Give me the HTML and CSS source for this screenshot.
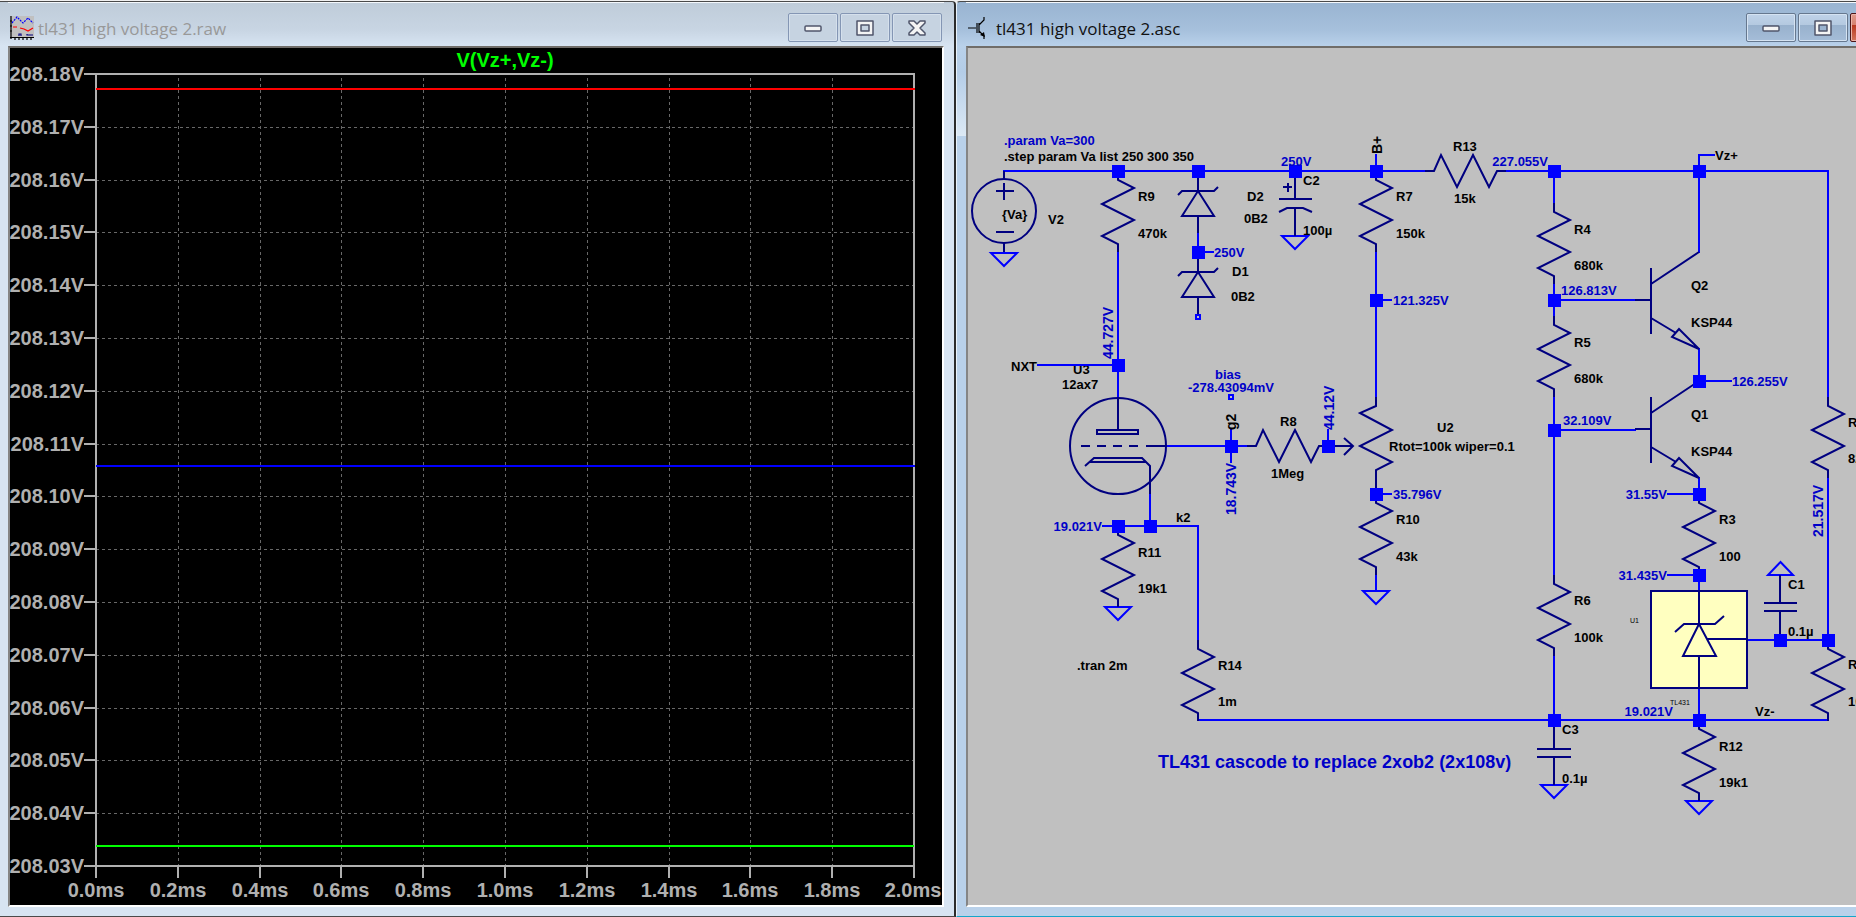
FILE: index.html
```html
<!DOCTYPE html>
<html lang="en">
<head>
<meta charset="utf-8">
<title>tl431 high voltage 2</title>
<link rel="stylesheet" href="styles.css">
</head>
<body>
<main class="desk">
  <section class="window window-inactive">
    <header class="titlebar">
      <svg class="app-icon" width="24" height="24" viewBox="0 0 24 24" aria-hidden="true">
        <rect width="24" height="22" fill="#c0c0c0"/>
        <path d="M2 7L7 1L13 7L18 2L23 7" fill="none" stroke="#00f" stroke-width="1.2" stroke-dasharray="2 1"/>
        <path d="M3 11H7M10 12L14 13L18 15L23 12" fill="none" stroke="#f00" stroke-width="1.2"/>
        <path d="M9 20V18H11V20M17 18V19H23" fill="none" stroke="#000080" stroke-width="1.2"/>
        <path d="M1 0V23M0 21.500H24M5 22V24M9 22V24M13 22V24M17 22V24M21 22V24M0 5H2M0 10H2M0 15H2" fill="none" stroke="#000" stroke-width="1.2"/>
      </svg>
      <h1 class="title">tl431 high voltage 2.raw</h1>
      <div class="controls">
        <button class="control" type="button" aria-label="Minimize"><svg width="20" height="18" viewBox="0 0 20 18"><rect class="glyph" x="2" y="7" width="16" height="5" rx="1"/></svg></button>
        <button class="control" type="button" aria-label="Maximize"><svg width="20" height="18" viewBox="0 0 20 18"><path class="glyph" fill-rule="evenodd" d="M2 2H18V16H2ZM6 6V12H14V6Z"/></svg></button>
        <button class="control" type="button" aria-label="Close"><svg width="20" height="18" viewBox="0 0 20 18"><path class="glyph" d="M2 2H7L10 5L13 2H18V4L13 9L18 14V16H13L10 13L7 16H2V14L7 9L2 4Z"/></svg></button>
      </div>
    </header>
    <div class="client client-plot">
      <svg class="canvas" viewBox="10 48 932 856" preserveAspectRatio="xMinYMin meet" role="img" aria-label="V(Vz+,Vz-) against time">
        <path class="grid" d="M96 127H914M96 180H914M96 232H914M96 285H914M96 338H914M96 391H914M96 444H914M96 496H914M96 549H914M96 602H914M96 655H914M96 708H914M96 760H914M96 813H914"/>
        <path class="grid" d="M178 78V866M260 78V866M341 78V866M423 78V866M505 78V866M587 78V866M669 78V866M750 78V866M832 78V866"/>
        <path class="axis" d="M96 74H914V866H96Z"/>
        <path class="axis" d="M84 74H96M84 127H96M84 180H96M84 232H96M84 285H96M84 338H96M84 391H96M84 444H96M84 496H96M84 549H96M84 602H96M84 655H96M84 708H96M84 760H96M84 813H96M84 866H96"/>
        <path class="axis" d="M96 866V878M178 866V878M260 866V878M341 866V878M423 866V878M505 866V878M587 866V878M669 866V878M750 866V878M832 866V878M914 866V878"/>
        <path class="trace trace-red" d="M96 89H915"/>
        <path class="trace trace-blue" d="M96 466H915"/>
        <path class="trace trace-green" d="M96 846H914"/>
        <text class="plot-title" x="505" y="67">V(Vz+,Vz-)</text>
        <g class="y-labels">
          <text x="84" y="81">208.18V</text><text x="84" y="134">208.17V</text><text x="84" y="187">208.16V</text><text x="84" y="239">208.15V</text>
          <text x="84" y="292">208.14V</text><text x="84" y="345">208.13V</text><text x="84" y="398">208.12V</text><text x="84" y="451">208.11V</text>
          <text x="84" y="503">208.10V</text><text x="84" y="556">208.09V</text><text x="84" y="609">208.08V</text><text x="84" y="662">208.07V</text>
          <text x="84" y="715">208.06V</text><text x="84" y="767">208.05V</text><text x="84" y="820">208.04V</text><text x="84" y="873">208.03V</text>
        </g>
        <g class="x-labels">
          <text x="96" y="897">0.0ms</text><text x="178" y="897">0.2ms</text><text x="260" y="897">0.4ms</text><text x="341" y="897">0.6ms</text>
          <text x="423" y="897">0.8ms</text><text x="505" y="897">1.0ms</text><text x="587" y="897">1.2ms</text><text x="669" y="897">1.4ms</text>
          <text x="750" y="897">1.6ms</text><text x="832" y="897">1.8ms</text><text x="913" y="897">2.0ms</text>
        </g>
      </svg>
    </div>
  </section>

  <section class="window window-active">
    <header class="titlebar">
      <svg class="app-icon" width="24" height="24" viewBox="0 0 24 24" aria-hidden="true">
        <path d="M0 12H8M9 7V17M11 7V17M11 9L16 4V1M11 15L16 20V23" fill="none" stroke="#000" stroke-width="1.2"/>
        <path d="M17 21L12 19L16 16Z"/>
      </svg>
      <h1 class="title">tl431 high voltage 2.asc</h1>
      <div class="controls">
        <button class="control" type="button" aria-label="Minimize"><svg width="20" height="18" viewBox="0 0 20 18"><rect class="glyph" x="2" y="7" width="16" height="5" rx="1"/></svg></button>
        <button class="control" type="button" aria-label="Maximize"><svg width="20" height="18" viewBox="0 0 20 18"><path class="glyph" fill-rule="evenodd" d="M2 2H18V16H2ZM6 6V12H14V6Z"/></svg></button>
        <button class="control control-close" type="button" aria-label="Close"><svg width="20" height="18" viewBox="0 0 20 18"><path class="glyph" d="M2 2H7L10 5L13 2H18V4L13 9L18 14V16H13L10 13L7 16H2V14L7 9L2 4Z"/></svg></button>
      </div>
    </header>
    <div class="client client-schematic">
      <svg class="canvas" viewBox="968 48 888 857" preserveAspectRatio="xMinYMin meet" role="img" aria-label="TL431 cascode schematic">
        <defs>
          <path id="res" d="M0 0V9L16 17L-16 33L16 49L-16 65L0 73V81"/>
          <path id="resh" d="M0 0H9L16 -16L32 16L48 -16L64 16L72 0H81"/>
          <path id="gnd" d="M-13 0H13L0 13Z"/>
          <path id="zener" d="M0 0V20M-20 24L-16 20H16L20 16M0 20L16 45H-16ZM0 45V62"/>
          <path id="npn" d="M-64 0H-48M-48 -32V34M-48 -16L0 -48M-48 18L-23 33M0 49L-20 29L-27 37Z"/>
          <rect id="node" x="-6" y="-6" width="13" height="13"/>
        </defs>

        <g class="label">
          <text x="1073" y="374">U3</text>
        </g>

        <g class="wire">
          <path d="M1004 171H1425M1505 171H1828V397M1828 478V640M1376 155V171M1699 171V155H1714"/>
          <path d="M1118 252V397M1038 365H1118M1198 233V252H1213M1376 252V397M1376 300H1391"/>
          <path d="M1554 171V203M1554 284V316M1554 300H1635M1554 397V575M1554 430H1635M1554 656V720"/>
          <path d="M1699 171V252M1699 349V381H1731M1699 478V494H1668M1668 575H1699V591M1699 688V720"/>
          <path d="M1166 446H1247M1231 430V462M1328 430V446M1376 494H1391M1376 575V591"/>
          <path d="M1150 493V526M1103 526H1198V640M1198 720H1828M1747 640H1828"/>
          <use href="#gnd" x="1004" y="253"/><use href="#gnd" x="1295" y="236"/><use href="#gnd" x="1118" y="607"/>
          <use href="#gnd" x="1376" y="591"/><use href="#gnd" x="1554" y="785"/><use href="#gnd" x="1699" y="801"/>
          <path d="M1768 575H1793L1780.500 562Z"/>
          <rect x="1196" y="315" width="4" height="4"/><rect x="1229" y="395" width="4" height="4"/>
        </g>

        <g class="part">
          <rect class="chip" x="1651" y="591" width="96" height="97"/>
          <use href="#res" x="1118" y="171"/><use href="#res" x="1376" y="171"/><use href="#res" x="1554" y="203"/>
          <use href="#res" x="1554" y="316"/><use href="#res" x="1554" y="575"/><use href="#res" x="1699" y="494"/>
          <use href="#res" x="1376" y="494"/><use href="#res" x="1118" y="526"/><use href="#res" x="1198" y="640"/>
          <use href="#res" x="1699" y="720"/><use href="#res" x="1828" y="397"/><use href="#res" x="1828" y="640"/>
          <use href="#resh" x="1425" y="171"/><use href="#resh" x="1247" y="446"/>
          <path d="M1376 397V406L1360 413L1392 430L1360 446L1392 462L1376 470V494"/>
          <path d="M1328 446H1353M1344 438L1353 446L1344 455"/>
          <use href="#zener" x="1198" y="171"/><use href="#zener" x="1198" y="252"/>
          <use href="#npn" x="1699" y="300"/><use href="#npn" x="1699" y="429"/>
          <circle cx="1004" cy="211" r="32"/>
          <path d="M1004 171V179M1004 243V252M996 191H1014M1004 183V200M996 232H1014"/>
          <path d="M1295 171V199M1279 199H1312M1279 212L1287 208H1303L1312 212M1295 208V236M1283 187H1292M1288 183V192"/>
          <path d="M1554 720V749M1537 749H1571M1537 757H1571M1554 757V785"/>
          <path d="M1780 575V603M1764 603H1797M1764 611H1797M1780 611V640"/>
          <path d="M1699 591V624M1675 632L1684 624H1715L1724 616M1699 624L1716 656H1683ZM1699 656V688M1707 639H1747"/>
          <circle cx="1118" cy="446" r="48"/>
          <path d="M1118 397V430M1097 430H1138V434H1097ZM1081 446H1090M1097 446H1106M1113 446H1122M1129 446H1138M1146 446H1166"/>
          <path d="M1085 466L1094 458H1142L1150 466V494M1090 462H1146"/>
        </g>

        <g class="node">
          <use href="#node" x="1118" y="171"/><use href="#node" x="1198" y="171"/><use href="#node" x="1295" y="171"/><use href="#node" x="1376" y="171"/>
          <use href="#node" x="1554" y="171"/><use href="#node" x="1699" y="171"/><use href="#node" x="1198" y="252"/><use href="#node" x="1118" y="365"/>
          <use href="#node" x="1376" y="300"/><use href="#node" x="1554" y="300"/><use href="#node" x="1699" y="381"/><use href="#node" x="1554" y="430"/>
          <use href="#node" x="1699" y="494"/><use href="#node" x="1699" y="575"/><use href="#node" x="1231" y="446"/><use href="#node" x="1328" y="446"/>
          <use href="#node" x="1376" y="494"/><use href="#node" x="1118" y="526"/><use href="#node" x="1150" y="526"/><use href="#node" x="1554" y="720"/>
          <use href="#node" x="1699" y="720"/><use href="#node" x="1780" y="640"/><use href="#node" x="1828" y="640"/>
        </g>

        <g class="label">
          <text x="1004" y="161">.step param Va list 250 300 350</text>
          <text x="1002" y="219">{Va}</text><text x="1048" y="224">V2</text>
          <text x="1138" y="201">R9</text><text x="1138" y="238">470k</text>
          <text x="1247" y="201">D2</text><text x="1244" y="223">0B2</text><text x="1232" y="276">D1</text><text x="1231" y="301">0B2</text>
          <text x="1303" y="185">C2</text><text x="1303" y="235">100µ</text>
          <text x="1396" y="201">R7</text><text x="1396" y="238">150k</text>
          <text x="1453" y="151">R13</text><text x="1454" y="203">15k</text>
          <text x="1574" y="234">R4</text><text x="1574" y="270">680k</text><text x="1574" y="347">R5</text><text x="1574" y="383">680k</text>
          <text x="1715" y="160">Vz+</text><text x="1691" y="290">Q2</text><text x="1691" y="327">KSP44</text><text x="1691" y="419">Q1</text><text x="1691" y="456">KSP44</text>
          <text x="1719" y="524">R3</text><text x="1719" y="561">100</text><text x="1574" y="605">R6</text><text x="1574" y="642">100k</text>
          <text x="1788" y="589">C1</text><text x="1788" y="636">0.1µ</text>
          <text x="1848" y="427">R1</text><text x="1848" y="463">82k</text><text x="1848" y="669">R2</text><text x="1848" y="706">10k</text>
          <text x="1755" y="716">Vz-</text><text x="1562" y="734">C3</text><text x="1562" y="783">0.1µ</text>
          <text x="1719" y="751">R12</text><text x="1719" y="787">19k1</text>
          <text class="end" x="1037" y="371">NXT</text><text x="1062" y="389">12ax7</text>
          <text x="1280" y="426">R8</text><text x="1271" y="478">1Meg</text><text x="1437" y="432">U2</text><text x="1389" y="451">Rtot=100k wiper=0.1</text>
          <text x="1396" y="524">R10</text><text x="1396" y="561">43k</text><text x="1176" y="522">k2</text>
          <text x="1138" y="557">R11</text><text x="1138" y="593">19k1</text><text x="1218" y="670">R14</text><text x="1218" y="706">1m</text>
          <text x="1077" y="670">.tran 2m</text>
          <text class="tiny" x="1630" y="623">U1</text><text class="tiny" x="1670" y="705">TL431</text>
          <text class="upright" transform="translate(1382 154) rotate(-90)">B+</text>
          <text class="upright" transform="translate(1236 430) rotate(-90)">g2</text>
        </g>

        <g class="label value">
          <text x="1004" y="145">.param Va=300</text><text x="1281" y="166">250V</text><text x="1214" y="257">250V</text>
          <text x="1393" y="305">121.325V</text><text class="end" x="1548" y="166">227.055V</text><text x="1561" y="295">126.813V</text>
          <text x="1732" y="386">126.255V</text><text x="1563" y="425">32.109V</text><text class="end" x="1667" y="499">31.55V</text>
          <text class="end" x="1667" y="580">31.435V</text><text class="end" x="1673" y="716">19.021V</text><text class="mid" x="1228" y="379">bias</text>
          <text class="mid" x="1231" y="392">-278.43094mV</text><text x="1393" y="499">35.796V</text><text class="end" x="1102" y="531">19.021V</text>
          <text class="upright" transform="translate(1113 359) rotate(-90)">44.727V</text>
          <text class="upright" transform="translate(1334 430) rotate(-90)">44.12V</text>
          <text class="upright" transform="translate(1236 515) rotate(-90)">18.743V</text>
          <text class="upright" transform="translate(1823 537) rotate(-90)">21.517V</text>
          <text class="caption" x="1158" y="768">TL431 cascode to replace 2xob2 (2x108v)</text>
        </g>
      </svg>
    </div>
  </section>
</main>
</body>
</html>
```
FILE: styles.css
```css
* { box-sizing: border-box; }

body {
  margin: 0;
  background: #f0f0f0;
  font-family: "Liberation Sans", Arial, sans-serif;
}

.desk {
  display: grid;
  grid-template-columns: 956fr 900fr;
  grid-template-rows: minmax(0, 1fr);
  height: 100vh;
  padding-top: 1px;
  overflow: hidden;
}

.window {
  display: flex;
  flex-direction: column;
  min-width: 0;
  border-top: 1px solid #4a4a4a;
  padding: 0 8px 9px;
}

.window-inactive {
  border-right: 2px solid #2b2b2b;
  border-bottom: 1px solid #4a4a4a;
  border-radius: 0 4px 0 0;
  background: linear-gradient(#bfccd9 0, #c8d5e3 28px, #d7e4f2 44px);
  padding-right: 10px;
}

.window-active {
  margin-right: -58px;
  border-bottom: 1px solid #16a6c9;
  border-left: 1px solid #eaf3fb;
  border-radius: 4px 0 0 0;
  background: linear-gradient(#99b4d1 0, #a6c0dc 28px, #b9d1ea 44px, #b4cde8 70px, #dce9f5 134px, #b9d1ea 134px);
  padding-left: 9px;
  padding-right: 12px;
}

.titlebar {
  display: flex;
  align-items: center;
  gap: 4px;
  height: 44px;
  border-top: 1px solid #f4f8fc;
  padding: 8px 2px 2px;
}

.app-icon { flex: none; }

.title {
  flex: 1;
  margin: 0;
  padding-top: 2px;
  font: 400 17px/24px "Open Sans", "Segoe UI", sans-serif;
  white-space: nowrap;
  color: #111;
}

.window-inactive .title { color: #999; }

.controls { display: flex; gap: 2px; }

.control {
  display: grid;
  place-items: center;
  width: 50px;
  height: 29px;
  border: 1px solid #66788f;
  border-radius: 2px;
  padding: 0;
  background: linear-gradient(#c0d3e9 0, #b4c9e0 40%, #98b1cd 42%, #a5bdd8);
  box-shadow: inset 0 0 0 1px #d5e3f2;
}

.window-inactive .control {
  border-color: #8496b4;
  background: #c6d3e1;
  box-shadow: inset 0 0 0 1px #d5e0ec;
}

.window-active .control-close {
  border-color: #4c1519;
  background: linear-gradient(#e09a8c 0, #d5806f 40%, #b8371f 42%, #d4745c);
  box-shadow: inset 0 0 0 1px #eab5aa;
}

.glyph { fill: #f4f4f4; stroke: #50566b; stroke-width: 1.5; stroke-linejoin: round; }

.client {
  flex: 1;
  min-height: 0;
  border: 2px solid #fff;
  border-top-color: #706d69;
  border-left-color: #858585;
  overflow: hidden;
}

.client-plot { background: #000; }
.client-schematic { background: #c0c0c0; }

.canvas { display: block; width: 100%; height: 100%; overflow: visible; }

.grid { fill: none; stroke: #686868; stroke-dasharray: 3 3; shape-rendering: crispEdges; }
.axis { fill: none; stroke: #b0b0b0; stroke-width: 2; }
.trace { fill: none; stroke-width: 2; }
.trace-red { stroke: #f00; }
.trace-blue { stroke: #00f; }
.trace-green { stroke: #0f0; }

.plot-title, .y-labels, .x-labels { font-size: 20px; font-weight: 700; fill: #b0b0b0; }
.plot-title { fill: #0f0; text-anchor: middle; }
.y-labels { text-anchor: end; }
.x-labels { text-anchor: middle; }

.wire { fill: none; stroke: #00f; stroke-width: 2; stroke-linecap: square; }
.part { fill: none; stroke: #000080; stroke-width: 2; }
.chip { fill: #ffffc0; }
.node { fill: #00f; }

.label {
  font-family: "Liberation Sans Narrow", "Arial Narrow", "Liberation Sans", sans-serif;
  font-size: 13px;
  font-weight: 700;
  fill: #000;
}

.value { fill: #0000c8; }
.upright { font-size: 14px; }
.tiny { font-size: 7px; font-weight: 400; }
.caption { font-size: 18px; }
.end { text-anchor: end; }
.mid { text-anchor: middle; }
```
